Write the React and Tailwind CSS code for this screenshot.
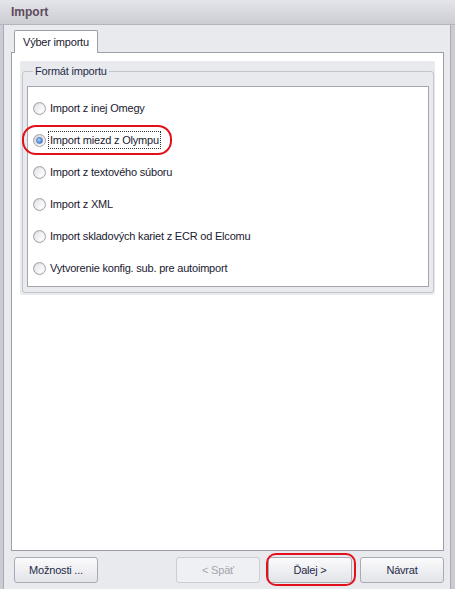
import React from 'react'

const options = [
  'Import z inej Omegy',
  'Import miezd z Olympu',
  'Import z textového súboru',
  'Import z XML',
  'Import skladových kariet z ECR od Elcomu',
  'Vytvorenie konfig. sub. pre autoimport',
]

function Radio({ checked }) {
  return (
    <span className="w-[13px] h-[13px] shrink-0 rounded-full border border-[#a2a3ab] bg-gradient-to-br from-[#d3d4da] to-[#fbfbfc] flex items-center justify-center">
      {checked ? (
        <span className="w-[7px] h-[7px] rounded-full bg-[radial-gradient(circle_at_35%_35%,#a9d4ff,#2e6bcc)] border border-[#4b78b8]" />
      ) : (
        <span className="w-[9px] h-[9px] rounded-full bg-gradient-to-br from-[#e6e7eb] to-white" />
      )}
    </span>
  )
}

function Button({ children, disabled }) {
  return (
    <button
      className={
        disabled
          ? 'w-[84px] h-[26px] rounded-[3px] border border-[#cdced5] bg-[#eef0f3] text-[#a4a5ac]'
          : 'w-[84px] h-[26px] rounded-[3px] border border-[#a9aab3] bg-gradient-to-b from-[#fbfbfc] to-[#e3e4e9] text-[#1e2b48]'
      }
    >
      {children}
    </button>
  )
}

export default function App() {
  return (
    <div className="relative w-[455px] h-[589px] flex flex-col bg-[#e9eaee] overflow-hidden font-['Liberation_Sans',Arial,sans-serif] text-[11px] tracking-[-0.2px] text-[#1a2030]">
      {/* Title bar */}
      <div className="h-[25px] shrink-0 flex items-center pl-[11px] bg-gradient-to-b from-[#e4e5ea] to-[#cccdd4] border-b border-[#b3b4bc]">
        <span className="font-bold text-[12px] tracking-normal text-[#5e4b5c]">Import</span>
      </div>

      {/* Window body */}
      <div className="flex-1 flex border-l-[3px] border-r-[4px] border-[#cbccd3]">
        <div className="flex-1 flex flex-col border-l border-r border-[#a9aab3] pl-[7px] pr-[6px]">
          {/* Tabs */}
          <div className="h-[27px] shrink-0 flex items-end pl-[3px]">
            <div className="relative -mb-px z-10 h-[23px] px-[8px] flex items-center bg-white border border-b-0 border-[#9d9ea8] rounded-t-[2px]">
              Výber importu
            </div>
          </div>

          {/* Tab page */}
          <div className="flex-1 flex flex-col bg-white border border-[#9d9ea8] p-[8px]">
            <div className="bg-[#e9eaee] rounded-[2px] pt-[4px] pl-[2px] pr-[1px] pb-[2px]">
              <fieldset className="border border-[#c3c4cc] rounded-[3px] px-[4px] pb-[5px]">
                <legend className="ml-[6px] px-[2px] leading-[13px] text-[#1e2b48]">Formát importu</legend>
                <div className="mt-[8px] bg-white border border-[#a5a6b0] pt-[5px] pb-[2px]">
                  {options.map((o, i) => (
                    <div key={o} className="h-[32px] flex items-center pl-[5px] gap-[3px]">
                      <Radio checked={i === 1} />
                      <span className={i === 1 ? 'outline outline-1 outline-dotted outline-[#333] px-[1px]' : 'px-[1px]'}>
                        {o}
                      </span>
                    </div>
                  ))}
                </div>
              </fieldset>
            </div>
          </div>

          {/* Footer buttons */}
          <div className="h-[38px] shrink-0 flex items-center pl-[3px]">
            <Button>Možnosti ...</Button>
            <div className="ml-auto flex gap-[8px]">
              <Button disabled>&lt; Späť</Button>
              <Button>Ďalej &gt;</Button>
              <Button>Návrat</Button>
            </div>
          </div>
        </div>
      </div>

      {/* Red annotation marks */}
      <div className="absolute left-[22px] top-[125px] w-[150px] h-[30px] rounded-[14px] border-[2.5px] border-[#e3101b] pointer-events-none" />
      <div className="absolute left-[266px] top-[553px] w-[90px] h-[33px] rounded-[10px] border-[2.5px] border-[#e3101b] pointer-events-none" />
    </div>
  )
}
